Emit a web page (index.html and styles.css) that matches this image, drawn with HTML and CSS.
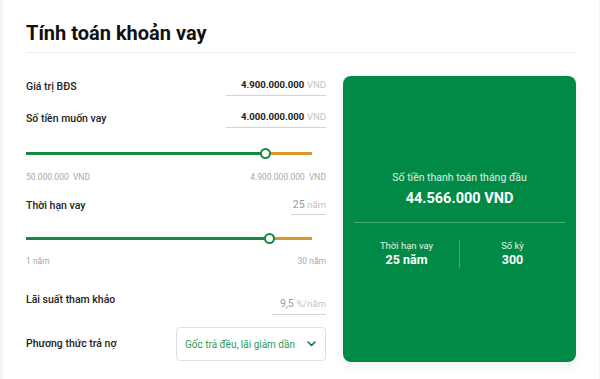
FILE: index.html
```html
<!DOCTYPE html>
<html lang="vi">
<head>
<meta charset="utf-8">
<title>Tính toán khoản vay</title>
<link rel="stylesheet" href="styles.css">
</head>
<body>
<div class="panel">
  <header class="head">
    <h1 class="title">Tính toán khoản vay</h1>
  </header>
  <main class="calc">
    <section class="form">
      <div class="row row-1">
        <span class="label">Giá trị BĐS</span>
        <span class="field w100"><b class="num">4.900.000.000</b> <span class="unit">VND</span></span>
      </div>
      <div class="row row-2">
        <span class="label">Số tiền muốn vay</span>
        <span class="field w100"><b class="num">4.000.000.000</b> <span class="unit">VND</span></span>
      </div>
      <div class="slider s1">
        <div class="fill" style="width:239px"></div>
        <div class="rest"></div>
        <span class="thumb" style="left:239px"></span>
      </div>
      <div class="range r1"><span>50.000.000 &nbsp;VND</span><span>4.900.000.000 &nbsp;VND</span></div>
      <div class="row row-3">
        <span class="label">Thời hạn vay</span>
        <span class="field w35"><span class="muted">25</span> <span class="unit">năm</span></span>
      </div>
      <div class="slider s2">
        <div class="fill" style="width:243px"></div>
        <div class="rest"></div>
        <span class="thumb" style="left:243px"></span>
      </div>
      <div class="range r2"><span>1 năm</span><span>30 năm</span></div>
      <div class="row row-4">
        <span class="label">Lãi suất tham khảo</span>
        <span class="field w54"><span class="muted">9,5</span> <span class="unit">%/năm</span></span>
      </div>
      <div class="row row-5">
        <span class="label">Phương thức trả nợ</span>
        <div class="select">
          <span class="select-text">Gốc trả đều, lãi giảm dần</span>
          <svg class="chev" width="9" height="6" viewBox="0 0 9 6"><path d="M1 1l3.5 3.5L8 1" fill="none" stroke="#0c7a3c" stroke-width="1.6" stroke-linecap="round" stroke-linejoin="round"/></svg>
        </div>
      </div>
    </section>
    <aside class="result">
      <div class="res-cap">Số tiền thanh toán tháng đầu</div>
      <div class="res-amount">44.566.000 VND</div>
      <div class="res-line"></div>
      <div class="res-stats">
        <div class="stat">
          <div class="stat-cap">Thời hạn vay</div>
          <div class="stat-val">25 năm</div>
        </div>
        <div class="stat-sep"></div>
        <div class="stat">
          <div class="stat-cap">Số kỳ</div>
          <div class="stat-val">300</div>
        </div>
      </div>
    </aside>
  </main>
</div>
</body>
</html>
```

FILE: styles.css
```css
* { box-sizing: border-box; }
html, body { margin: 0; padding: 0; }
body {
  background: #f3f3f4;
  font-family: Roboto, "Noto Sans", "Liberation Sans", sans-serif;
  color: #222;
  overflow: hidden;
  height: 379px;
}
.panel {
  margin-left: 3px;
  width: 596px;
  height: 379px;
  background: #fff;
  padding: 0 23px;
}
.head {
  padding-top: 20px;
  height: 53px;
  border-bottom: 1px solid #eceef4;
}
.title {
  margin: 0;
  font-size: 20px;
  line-height: 26px;
  font-weight: 700;
  color: #111;
}
.calc {
  display: grid;
  grid-template-columns: 300px 233px;
  column-gap: 17px;
  align-items: start;
}
.form {
  padding-top: 24px;
  display: flex;
  flex-direction: column;
}
.row {
  display: flex;
  justify-content: space-between;
  align-items: center;
}
.label {
  font-size: 10.5px;
  font-weight: 500;
  color: #222;
  line-height: 16px;
}
.field {
  display: block;
  text-align: right;
  line-height: 16px;
  padding-bottom: 2px;
  border-bottom: 1px solid #d4d4d6;
  font-size: 10.5px;
}
.w100 { width: 100px; }
.w35 { width: 35px; }
.w54 { width: 54px; }
.num { font-weight: 700; color: #222; font-size: 9.6px; }
.unit { color: #c2c2c4; font-size: 9.5px; }
.muted { color: #9a9a9c; }
.row-2 { margin-top: 13px; }
.slider {
  position: relative;
  width: 286px;
  height: 12px;
  display: flex;
  align-items: center;
}
.s1 { margin-top: 19px; }
.s2 { margin-top: 17px; }
.fill { height: 3px; background: #138a3d; }
.rest { height: 3px; flex: 1; background: #dc972c; }
.thumb {
  position: absolute;
  top: 1px;
  width: 11px;
  height: 11px;
  margin-left: -5px;
  border-radius: 50%;
  background: #fff;
  border: 2px solid #138a3d;
}
.range {
  display: flex;
  justify-content: space-between;
  font-size: 8.5px;
  line-height: 12px;
  color: #a9a9ab;
}
.r1 { margin-top: 12px; }
.r2 { margin-top: 11px; }
.row-3 { margin-top: 14px; }
.row-3 .field { padding-bottom: 1px; }
.row-4 { margin-top: 25px; align-items: flex-start; }
.row-4 .field { margin-top: 4px; }
.row-5 { margin-top: 12px; }
.select {
  width: 150px;
  height: 34px;
  border: 1px solid #dfe0e2;
  border-radius: 4px;
  display: flex;
  align-items: center;
  justify-content: space-between;
  padding: 0 9px 0 8px;
}
.select-text {
  font-size: 10px;
  color: #2a9a58;
}
.chev { display: block; }
.result {
  margin-top: 23px;
  height: 286px;
  background: #018a45;
  border-radius: 8px;
  box-shadow: 0 4px 12px rgba(0, 0, 0, 0.07);
  color: #fff;
  display: flex;
  flex-direction: column;
  justify-content: center;
  padding: 0 11px;
  text-align: center;
}
.res-cap {
  font-size: 10.5px;
  line-height: 14px;
  color: #dff1e5;
}
.res-amount {
  margin-top: 4px;
  font-size: 14.5px;
  line-height: 20px;
  font-weight: 700;
}
.res-line {
  margin-top: 13px;
  height: 1px;
  background: rgba(255, 255, 255, 0.28);
}
.res-stats {
  margin-top: 17px;
  display: flex;
  align-items: stretch;
}
.stat { flex: 1; }
.stat-sep { width: 1px; background: rgba(255, 255, 255, 0.28); }
.stat-cap {
  font-size: 9.5px;
  line-height: 12px;
  color: #e3f3e9;
}
.stat-val {
  font-size: 12.5px;
  line-height: 16px;
  font-weight: 700;
}
```
